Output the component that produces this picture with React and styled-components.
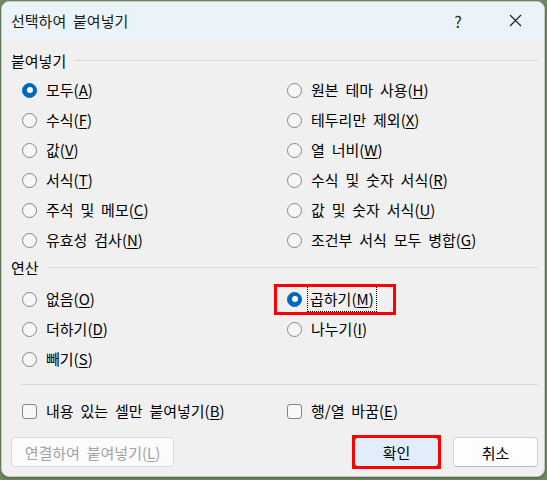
import React from "react";
import styled, { createGlobalStyle, css } from "styled-components";

const Global = createGlobalStyle`
  html, body { margin: 0; padding: 0; }
  body {
    background: #6f8a63;
    font-family: "Noto Sans CJK KR", "Noto Sans", sans-serif;
    width: 547px; height: 480px; overflow: hidden;
  }
`;

const Dialog = styled.div`
  box-sizing: border-box;
  margin: 1px 0 0 1px;
  width: 544px;
  height: 476px;
  background: #f0f0f0;
  border: 1px solid #c9c9c9;
  border-radius: 8px;
  overflow: hidden;
  display: flex;
  flex-direction: column;
  box-shadow: 0 1px 3px rgba(0,0,0,0.35);
  color: #000;
  font-size: 15px;
  word-spacing: 3.5px;
`;

const TitleBar = styled.div`
  height: 37px;
  background: #eaf4f8;
  display: flex;
  align-items: center;
  padding-left: 9px;
`;

const Title = styled.div`
  flex: 1;
  font-size: 15px;
  color: #1a1a1a;
`;

const TitleButton = styled.div`
  width: ${p => p.$w}px;
  height: 37px;
  display: flex;
  align-items: center;
  justify-content: center;
  font-size: 16px;
  color: #222;
`;

const Body = styled.div`
  flex: 1;
  display: flex;
  flex-direction: column;
  padding: 11px 6px 8px 9px;
`;

const SectionHeader = styled.div`
  height: 20px;
  display: flex;
  align-items: center;
  gap: 8px;
  margin-top: ${p => p.$mt || 0}px;
`;

const SectionLine = styled.div`
  flex: 1;
  height: 1px;
  background: #d8d8d8;
`;

const OptionGrid = styled.div`
  display: grid;
  grid-template-columns: 265px 1fr;
  grid-auto-rows: 30px;
  padding-left: 11px;
  margin-top: ${p => p.$mt || 0}px;
`;

const OptionRow = styled.label`
  position: relative;
  display: flex;
  align-items: center;
  gap: 9px;
  ${p => p.$highlight && css`
    &::after {
      content: "";
      position: absolute;
      left: -13px;
      top: 0px;
      width: 122px;
      height: 31px;
      box-sizing: border-box;
      border: 3px solid #f00;
      pointer-events: none;
    }
  `}
`;

const RadioCircle = styled.span`
  box-sizing: border-box;
  width: 15px;
  height: 15px;
  border-radius: 50%;
  flex: none;
  ${p => p.$checked ? css`
    background: #0067c0;
    border: 1px solid #0067c0;
    display: flex;
    align-items: center;
    justify-content: center;
    &::before {
      content: "";
      width: 6px;
      height: 6px;
      border-radius: 50%;
      background: #fff;
    }
  ` : css`
    background: #f7f7f7;
    border: 1px solid #858585;
  `}
`;

const Label = styled.span`
  white-space: nowrap;
  line-height: 20px;
  ${p => p.$focus && css`
    outline: 1px dotted #000;
    outline-offset: 2px;
    margin-left: -1px;
  `}
`;

const Key = styled.span`
  text-decoration: underline;
  text-underline-offset: 2px;
`;

const Separator = styled.div`
  height: 1px;
  background: #d8d8d8;
  margin: 10px 0 0 10px;
`;

const CheckRow = styled.div`
  display: grid;
  grid-template-columns: 265px 1fr;
  height: 20px;
  margin-top: 16px;
  padding-left: 11px;
`;

const CheckItem = styled.label`
  display: flex;
  align-items: center;
  gap: 9px;
`;

const CheckBox = styled.span`
  box-sizing: border-box;
  width: 15px;
  height: 15px;
  border-radius: 3px;
  border: 1px solid #858585;
  background: #f7f7f7;
  flex: none;
`;

const ButtonRow = styled.div`
  display: flex;
  align-items: center;
  margin-top: 16px;
  gap: 14px;
`;

const Button = styled.button`
  position: relative;
  box-sizing: border-box;
  height: 30px;
  width: ${p => p.$w}px;
  font-family: inherit;
  font-size: 15px;
  word-spacing: 3.5px;
  border-radius: 4px;
  padding: 0;
  border: 1px solid #d0d0d0;
  border-bottom-color: #bcbcbc;
  background: #fdfdfd;
  color: #000;
  ${p => p.$spacer && css`margin-right: auto;`}
  ${p => p.$disabled && css`
    color: #a2a2a2;
    border-color: #d9d9d9;
    background: #fbfbfb;
  `}
  ${p => p.$primary && css`
    background: #e1edf9;
    border: 1px solid #0067c0;
    &::after {
      content: "";
      position: absolute;
      left: -3px;
      top: -3px;
      right: -3px;
      bottom: -3px;
      border: 3px solid #f00;
      pointer-events: none;
    }
  `}
`;

const CloseIcon = () => (
  <svg width="13" height="13" viewBox="0 0 13 13">
    <path d="M1 1 L12 12 M12 1 L1 12" stroke="#222" strokeWidth="1.2" fill="none" />
  </svg>
);

const L = ({ text, k, focus }) => (
  <Label $focus={focus}>{text}(<Key>{k}</Key>)</Label>
);

const Radio = ({ checked, text, k, highlight, focus }) => (
  <OptionRow $highlight={highlight}>
    <RadioCircle $checked={checked} />
    <L text={text} k={k} focus={focus} />
  </OptionRow>
);

const pasteOpts = [
  ["모두", "A", true], ["원본 테마 사용", "H"],
  ["수식", "F"], ["테두리만 제외", "X"],
  ["값", "V"], ["열 너비", "W"],
  ["서식", "T"], ["수식 및 숫자 서식", "R"],
  ["주석 및 메모", "C"], ["값 및 숫자 서식", "U"],
  ["유효성 검사", "N"], ["조건부 서식 모두 병합", "G"],
];

export default function App() {
  return (
    <>
      <Global />
      <Dialog>
        <TitleBar>
          <Title>선택하여 붙여넣기</Title>
          <TitleButton $w={56}>?</TitleButton>
          <TitleButton $w={58}><CloseIcon /></TitleButton>
        </TitleBar>
        <Body>
          <SectionHeader>
            <span>붙여넣기</span>
            <SectionLine />
          </SectionHeader>
          <OptionGrid $mt={5}>
            {pasteOpts.map(([t, k, c]) => (
              <Radio key={k} text={t} k={k} checked={!!c} />
            ))}
          </OptionGrid>
          <SectionHeader $mt={2}>
            <span>연산</span>
            <SectionLine />
          </SectionHeader>
          <OptionGrid $mt={7}>
            <Radio text="없음" k="O" />
            <Radio text="곱하기" k="M" checked highlight focus />
            <Radio text="더하기" k="D" />
            <Radio text="나누기" k="I" />
            <Radio text="빼기" k="S" />
          </OptionGrid>
          <Separator />
          <CheckRow>
            <CheckItem><CheckBox /><L text="내용 있는 셀만 붙여넣기" k="B" /></CheckItem>
            <CheckItem><CheckBox /><L text="행/열 바꿈" k="E" /></CheckItem>
          </CheckRow>
          <ButtonRow>
            <Button $w={163} $disabled $spacer>연결하여 붙여넣기(<Key>L</Key>)</Button>
            <Button $w={85} $primary>확인</Button>
            <Button $w={85}>취소</Button>
          </ButtonRow>
        </Body>
      </Dialog>
    </>
  );
}
